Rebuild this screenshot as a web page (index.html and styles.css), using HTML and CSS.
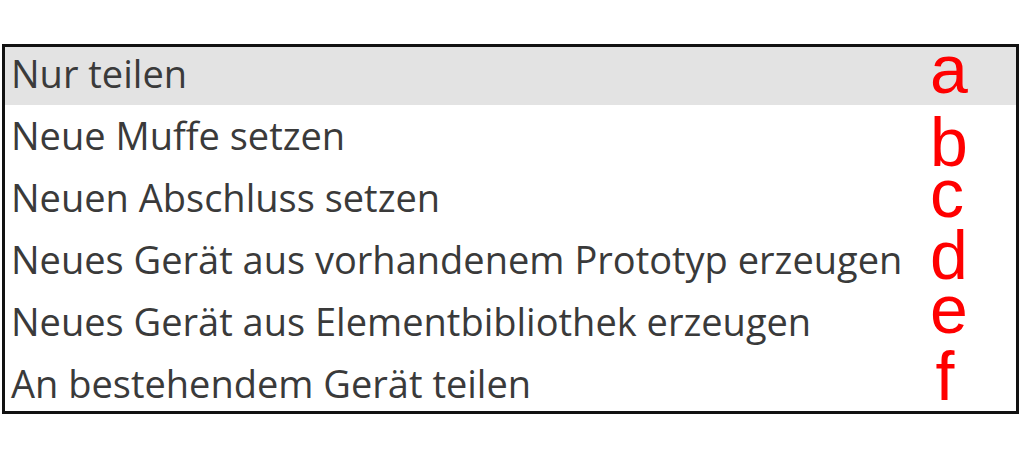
FILE: index.html
```html
<!DOCTYPE html>
<html>
<head>
  <title>Teilen</title>
  <meta name="viewport" content="width=device-width, initial-scale=1">
  <link rel="stylesheet" href="styles.css">
</head>
<body>
  <div class="menu">
    <div class="item active"><span class="label">Nur teilen</span><span class="mark">a</span></div>
    <div class="item"><span class="label">Neue Muffe setzen</span><span class="mark mark-b">b</span></div>
    <div class="item"><span class="label">Neuen Abschluss setzen</span><span class="mark">c</span></div>
    <div class="item"><span class="label">Neues Gerät aus vorhandenem Prototyp erzeugen</span><span class="mark">d</span></div>
    <div class="item"><span class="label">Neues Gerät aus Elementbibliothek erzeugen</span><span class="mark mark-e">e</span></div>
    <div class="item"><span class="label">An bestehendem Gerät teilen</span><span class="mark mark-f">f</span></div>
  </div>
</body>
</html>
```

FILE: styles.css
```css
body { margin:0; background:#fff; font-family:'Open Sans',sans-serif; }
.menu { margin:44px 2px 0 2px; width:1011px; height:364px; border:3px solid #111;
        overflow:hidden; display:flex; flex-direction:column; }
.item { display:flex; align-items:center; justify-content:space-between;
        height:58px; flex:none; margin-bottom:4px; padding:0 0 6px 6px; box-sizing:border-box; }
.item.active { background:#e3e3e3; }
.label { font-size:38px; color:#3a3a3a; white-space:nowrap; line-height:50px; }
.mark { font-family:'Liberation Sans',Arial,sans-serif; font-size:68px; line-height:46px; height:46px;
        color:#ff0000; width:30px; text-align:center; margin-right:56px; position:relative; top:-4px; }
.mark-b { top:7px; }
.mark-e { top:-12px; }
.mark-f { top:-7px; }
```
